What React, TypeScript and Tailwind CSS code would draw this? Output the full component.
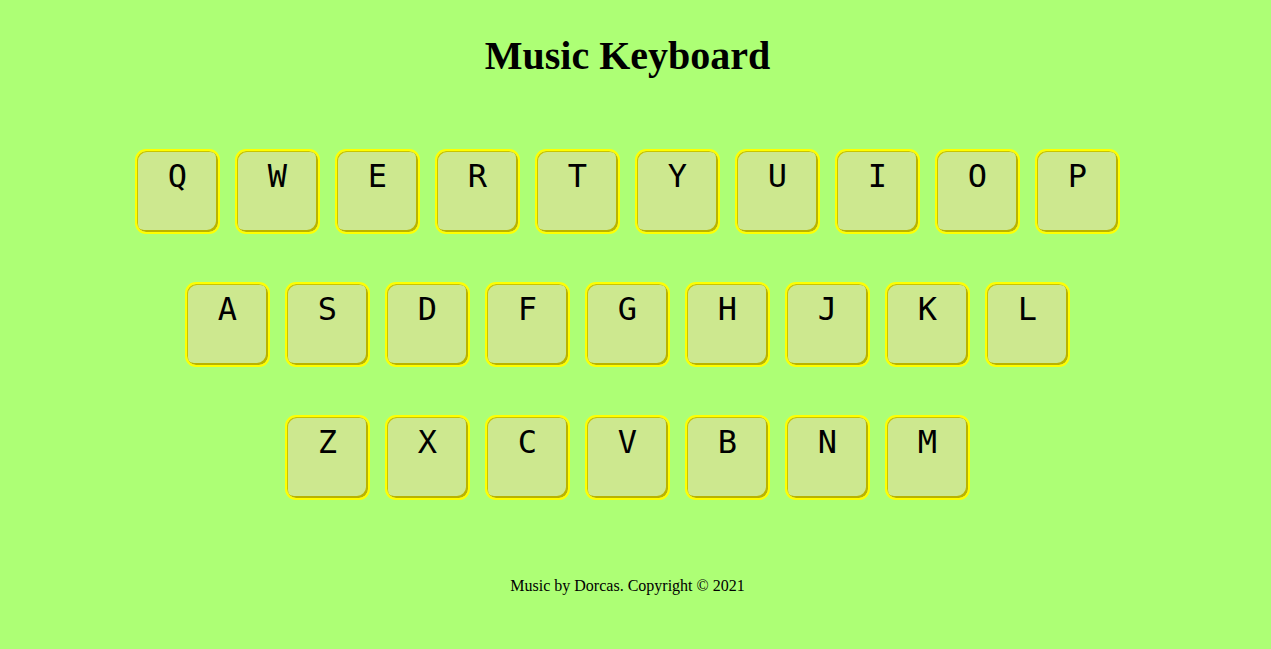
const rows = [
  ["Q", "W", "E", "R", "T", "Y", "U", "I", "O", "P"],
  ["A", "S", "D", "F", "G", "H", "J", "K", "L"],
  ["Z", "X", "C", "V", "B", "N", "M"],
];

function Key({ letter }: { letter: string }) {
  return (
    <button className="flex h-[85px] w-[85px] items-start justify-center rounded-[11px] border-[2px] border-[#ffff00] bg-[#cde88f] pt-[6px] text-[32px] leading-[38px] text-black shadow-[inset_1px_1px_0_#c9c400,inset_-2px_-2px_0_#b9b300] [font-family:'DejaVu_Sans_Mono',monospace]">
      {letter}
    </button>
  );
}

export default function App() {
  return (
    <div className="min-h-[649px] w-full bg-[#adff75] pr-[16px] [font-family:'Liberation_Serif',serif]">
      <h1 className="pt-[33px] text-center text-[40px] font-bold leading-[46px] text-black">
        Music Keyboard
      </h1>

      <main className="mt-[70px] flex flex-col items-center gap-[48px]">
        {rows.map((row, i) => (
          <div key={i} className="flex gap-[15px]">
            {row.map((k) => (
              <Key key={k} letter={k} />
            ))}
          </div>
        ))}
      </main>

      <footer className="mt-[74px] text-center text-[16px] text-black">
        Music by Dorcas. Copyright © 2021
      </footer>
    </div>
  );
}
